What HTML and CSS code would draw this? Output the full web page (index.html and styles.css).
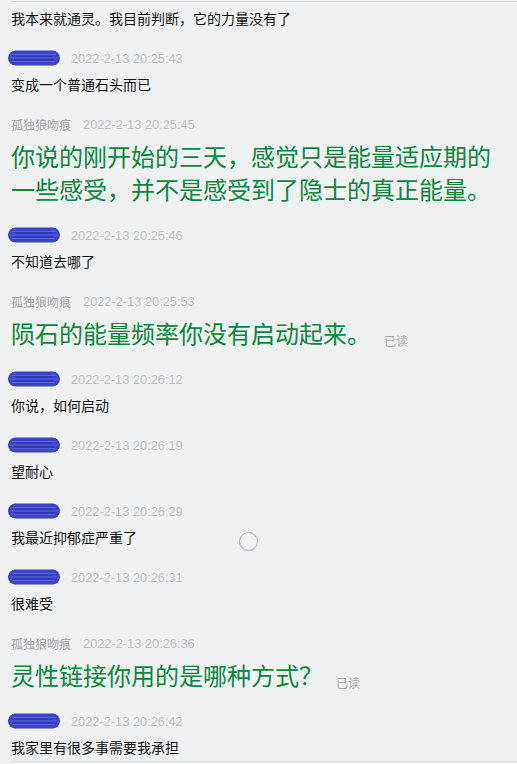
FILE: index.html
```html
<!DOCTYPE html>
<html lang="zh-CN">
<head>
<meta charset="utf-8">
<title>聊天记录</title>
<link rel="stylesheet" href="styles.css">
</head>
<body>
<div class="page">
  <div class="rule rule-top"></div>
  <div class="list">
    <div class="msg">
      <div class="text">我本来就通灵。我目前判断，它的力量没有了</div>
    </div>

    <div class="msg">
      <div class="head"><span class="blot"><svg width="52" height="16" viewBox="0 0 52 16"><rect x="0" y="0.5" width="52" height="15" rx="7.5" fill="#3c43c4"/><path d="M4 4.5H48M2 8H50M4 11.5H47" stroke="#5a62dc" stroke-width="1.2"/><path d="M8 6.3H44M6 9.8H46" stroke="#2b31a6" stroke-width="0.9"/></svg></span><span class="time">2022-2-13 20:25:43</span></div>
      <div class="text">变成一个普通石头而已</div>
    </div>

    <div class="msg">
      <div class="head"><span class="name">孤独狼吻痕</span><span class="time">2022-2-13 20:25:45</span></div>
      <div class="big">你说的刚开始的三天，感觉只是能量适应期的一些感受，并不是感受到了隐士的真正能量。</div>
    </div>

    <div class="msg">
      <div class="head"><span class="blot"><svg width="52" height="16" viewBox="0 0 52 16"><rect x="0" y="0.5" width="52" height="15" rx="7.5" fill="#3c43c4"/><path d="M4 4.5H48M2 8H50M4 11.5H47" stroke="#5a62dc" stroke-width="1.2"/><path d="M8 6.3H44M6 9.8H46" stroke="#2b31a6" stroke-width="0.9"/></svg></span><span class="time">2022-2-13 20:25:46</span></div>
      <div class="text">不知道去哪了</div>
    </div>

    <div class="msg">
      <div class="head"><span class="name">孤独狼吻痕</span><span class="time">2022-2-13 20:25:53</span></div>
      <div class="big">陨石的能量频率你没有启动起来。<span class="read">已读</span></div>
    </div>

    <div class="msg">
      <div class="head"><span class="blot"><svg width="52" height="16" viewBox="0 0 52 16"><rect x="0" y="0.5" width="52" height="15" rx="7.5" fill="#3c43c4"/><path d="M4 4.5H48M2 8H50M4 11.5H47" stroke="#5a62dc" stroke-width="1.2"/><path d="M8 6.3H44M6 9.8H46" stroke="#2b31a6" stroke-width="0.9"/></svg></span><span class="time">2022-2-13 20:26:12</span></div>
      <div class="text">你说，如何启动</div>
    </div>

    <div class="msg">
      <div class="head"><span class="blot"><svg width="52" height="16" viewBox="0 0 52 16"><rect x="0" y="0.5" width="52" height="15" rx="7.5" fill="#3c43c4"/><path d="M4 4.5H48M2 8H50M4 11.5H47" stroke="#5a62dc" stroke-width="1.2"/><path d="M8 6.3H44M6 9.8H46" stroke="#2b31a6" stroke-width="0.9"/></svg></span><span class="time">2022-2-13 20:26:19</span></div>
      <div class="text">望耐心</div>
    </div>

    <div class="msg">
      <div class="head"><span class="blot"><svg width="52" height="16" viewBox="0 0 52 16"><rect x="0" y="0.5" width="52" height="15" rx="7.5" fill="#3c43c4"/><path d="M4 4.5H48M2 8H50M4 11.5H47" stroke="#5a62dc" stroke-width="1.2"/><path d="M8 6.3H44M6 9.8H46" stroke="#2b31a6" stroke-width="0.9"/></svg></span><span class="time">2022-2-13 20:26:29</span></div>
      <div class="text">我最近抑郁症严重了</div>
    </div>

    <div class="msg">
      <div class="head"><span class="blot"><svg width="52" height="16" viewBox="0 0 52 16"><rect x="0" y="0.5" width="52" height="15" rx="7.5" fill="#3c43c4"/><path d="M4 4.5H48M2 8H50M4 11.5H47" stroke="#5a62dc" stroke-width="1.2"/><path d="M8 6.3H44M6 9.8H46" stroke="#2b31a6" stroke-width="0.9"/></svg></span><span class="time">2022-2-13 20:26:31</span></div>
      <div class="text">很难受</div>
    </div>

    <div class="msg">
      <div class="head"><span class="name">孤独狼吻痕</span><span class="time">2022-2-13 20:26:36</span></div>
      <div class="big">灵性链接你用的是哪种方式？<span class="read">已读</span></div>
    </div>

    <div class="msg">
      <div class="head"><span class="blot"><svg width="52" height="16" viewBox="0 0 52 16"><rect x="0" y="0.5" width="52" height="15" rx="7.5" fill="#3c43c4"/><path d="M4 4.5H48M2 8H50M4 11.5H47" stroke="#5a62dc" stroke-width="1.2"/><path d="M8 6.3H44M6 9.8H46" stroke="#2b31a6" stroke-width="0.9"/></svg></span><span class="time">2022-2-13 20:26:42</span></div>
      <div class="text">我家里有很多事需要我承担</div>
    </div>
  </div>
  <div class="rule rule-bottom"></div>
  <div class="spinner"></div>
</div>
</body>
</html>
```

FILE: styles.css
```css
html, body {
  margin: 0;
  padding: 0;
  background: #f0f1f3;
}

body {
  font-family: "Noto Sans CJK SC", "Noto Sans", sans-serif;
  color: #111;
}

.page {
  position: relative;
  width: 517px;
  height: 764px;
  overflow: hidden;
  padding-left: 11px;
  box-sizing: border-box;
}

.rule {
  height: 1px;
  background: #d9d9db;
}

.rule-top {
  margin-top: 1px;
}

.rule-bottom {
  margin-top: 4px;
}

.list {
  display: flex;
  flex-direction: column;
  gap: 20px;
  padding-top: 6px;
  padding-right: 16px;
}

.head {
  display: flex;
  align-items: center;
  height: 20px;
  white-space: nowrap;
}

.name {
  font-size: 12px;
  color: #a3a3a3;
  margin-right: 12px;
}

.blot {
  display: inline-flex;
  margin-left: -3px;
  margin-right: 11px;
}

.time {
  font-family: "Liberation Sans", Arial, sans-serif;
  font-size: 12.8px;
  color: #c2c2c4;
}

.text {
  font-size: 14px;
  line-height: 20px;
  margin-top: 6px;
  color: #141414;
}

.msg:first-child .text {
  margin-top: 0;
}

.big {
  font-size: 24px;
  line-height: 33px;
  margin-top: 5px;
  color: #08893b;
}

.read {
  font-size: 12px;
  line-height: 12px;
  color: #a9a9a9;
  margin-left: 13px;
  vertical-align: -3px;
}

.spinner {
  position: absolute;
  left: 239px;
  top: 532px;
  width: 17px;
  height: 17px;
  border: 1.5px solid #aeb0bc;
  border-radius: 50%;
}
```
